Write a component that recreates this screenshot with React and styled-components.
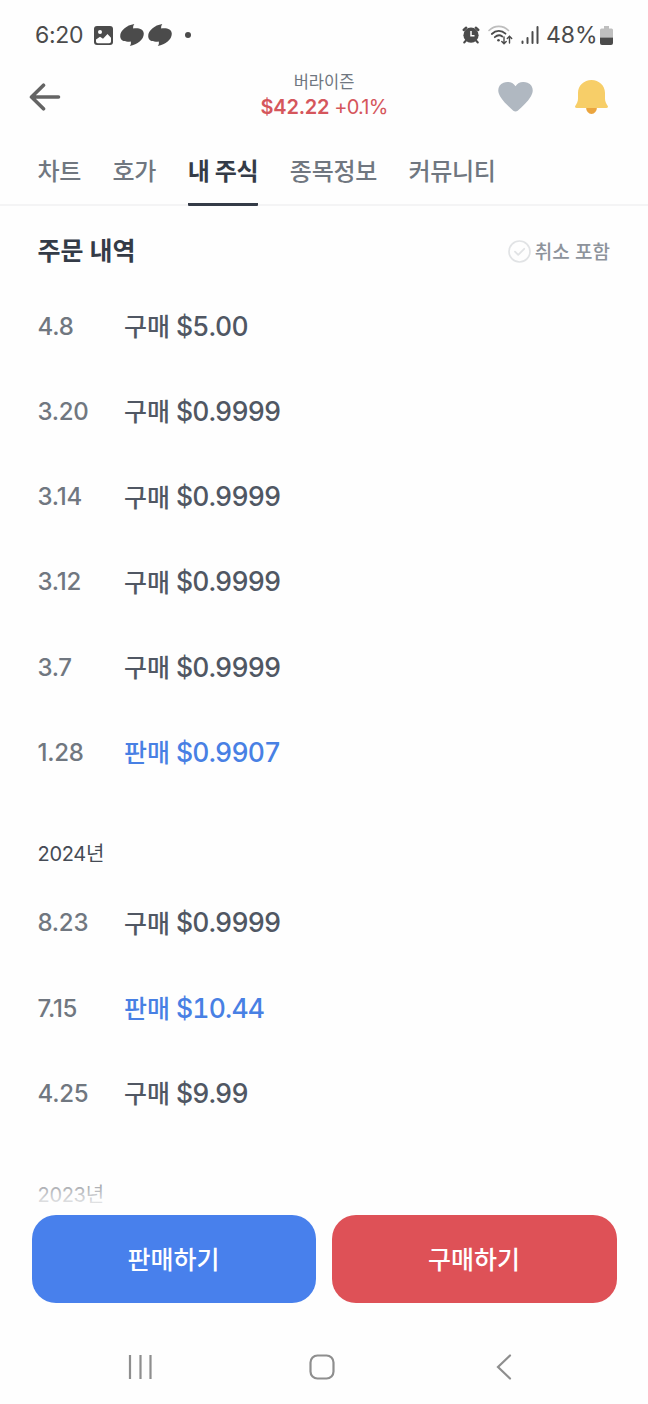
import styled, { createGlobalStyle } from "styled-components";

const GlobalStyle = createGlobalStyle`
  * {
    box-sizing: border-box;
  }
  body {
    margin: 0;
    background: #fefefe;
    font-family: Inter, "Noto Sans CJK KR", sans-serif;
  }
`;

const Screen = styled.div`
  display: flex;
  flex-direction: column;
  width: 648px;
  height: 1404px;
  overflow: hidden;
  background: #fefefe;
`;

const StatusBar = styled.div`
  display: flex;
  align-items: center;
  justify-content: space-between;
  flex-shrink: 0;
  height: 70px;
  padding: 0 35px 0 35px;
  color: #4b4b4b;
`;

const StatusGroup = styled.div`
  display: flex;
  align-items: center;
`;

const StatusText = styled.span`
  font-size: 23px;
  line-height: 30px;
  letter-spacing: -0.3px;
`;

const BatteryLevel = styled(StatusText)`
  width: 54px;
  letter-spacing: 0;
`;

const IconRow = styled.div`
  display: flex;
  align-items: center;
  gap: ${(props) => props.$gap};
  margin: 0 7px;
`;

const Dot = styled.span`
  width: 6px;
  height: 6px;
  margin-left: 9px;
  border-radius: 50%;
  background: #4b4b4b;
`;

const Clock = styled.div`
  width: 59px;
`;

const Header = styled.header`
  display: grid;
  grid-template-columns: 120px 1fr 120px;
  align-items: center;
  flex-shrink: 0;
  height: 54px;
  padding: 0 40px 0 29px;
`;

const IconButton = styled.button`
  display: flex;
  padding: 0;
  border: none;
  background: none;
  cursor: pointer;
`;

const HeaderActions = styled.div`
  display: flex;
  align-items: center;
  justify-content: flex-end;
  gap: 42px;
`;

const StockInfo = styled.div`
  display: flex;
  flex-direction: column;
  align-items: center;
  padding: 0 0 3px 11px;
`;

const StockName = styled.span`
  color: #6f7680;
  font-size: 16.5px;
  line-height: 24px;
`;

const StockPrice = styled.span`
  color: #d5565c;
  font-size: 20px;
  line-height: 27px;
  letter-spacing: ${(props) => (props.$strong ? "-0.2px" : "-0.8px")};
  font-weight: ${(props) => (props.$strong ? "600" : "400")};
`;

const PriceLine = styled.div`
  display: flex;
  gap: 5px;
`;

const Tabs = styled.nav`
  display: flex;
  flex-shrink: 0;
  gap: 31.5px;
  height: 82px;
  padding: 0 37.5px;
  border-bottom: 2px solid #f4f4f5;
`;

const Tab = styled.a`
  display: flex;
  align-items: center;
  height: 82px;
  padding-top: 12px;
  border-bottom: 3px solid ${(props) => (props.$active ? "#343b47" : "transparent")};
  border-radius: 1px;
  color: ${(props) => (props.$active ? "#343b47" : "#707780")};
  font-size: 24px;
  font-weight: ${(props) => (props.$active ? "700" : "500")};
  letter-spacing: -0.3px;
  white-space: nowrap;
  cursor: pointer;
`;

const SectionHead = styled.div`
  display: flex;
  align-items: center;
  justify-content: space-between;
  flex-shrink: 0;
  height: 77px;
  padding: 13px 38px 0 37.5px;
`;

const SectionTitle = styled.h2`
  margin: 0;
  color: #343b47;
  font-size: 25px;
  font-weight: 700;
  line-height: 36px;
`;

const Filter = styled.button`
  display: flex;
  align-items: center;
  gap: 4px;
  padding: 0;
  border: none;
  background: none;
  cursor: pointer;
`;

const FilterText = styled.span`
  color: #8d939b;
  font-family: "Noto Sans CJK KR", sans-serif;
  font-size: 19px;
  font-weight: 500;
  line-height: 28px;
`;

const History = styled.main`
  position: relative;
  flex: 1;
  min-height: 0;
  overflow: hidden;
`;

const YearLabel = styled.div`
  display: flex;
  align-items: center;
  height: 85.2px;
  padding: 30px 37.5px 0;
  color: #454b55;
  font-size: 20px;
  letter-spacing: -0.3px;
`;

const Order = styled.div`
  display: flex;
  align-items: center;
  height: 85.25px;
  padding: 0 37.5px;
`;

const OrderDate = styled.span`
  width: 86.5px;
  padding-top: 1px;
  color: #707780;
  font-size: 24px;
  font-weight: 500;
  letter-spacing: -0.25px;
`;

const OrderType = styled.span`
  width: 52px;
  padding-bottom: 1px;
  color: ${(props) => (props.$sell ? "#4880e4" : "#505763")};
  font-size: 25px;
  font-weight: 500;
`;

const OrderAmount = styled.span`
  color: ${(props) => (props.$sell ? "#4880e4" : "#505763")};
  font-size: 26.5px;
  font-weight: 500;
  font-variant-numeric: tabular-nums;
  letter-spacing: -0.8px;
`;

const Fade = styled.div`
  position: absolute;
  left: 0;
  right: 0;
  bottom: 0;
  height: 60px;
  background: linear-gradient(rgba(254, 254, 254, 0), #fefefe 95%);
`;

const Actions = styled.footer`
  display: grid;
  grid-template-columns: 284px 285px;
  gap: 16px;
  flex-shrink: 0;
  height: 88px;
  padding: 0 32px;
`;

const ActionButton = styled.button`
  padding: 0 1px 3px 0;
  border: none;
  border-radius: 24px;
  background: ${(props) => (props.$sell ? "#4880ec" : "#de5157")};
  color: #fff;
  font-family: inherit;
  font-size: 25px;
  font-weight: 500;
  cursor: pointer;
`;

const SystemNav = styled.div`
  display: grid;
  grid-template-columns: 180.5px 187px auto;
  align-items: center;
  flex-shrink: 0;
  height: 101px;
  padding: 27px 0 0 128px;
`;

const orders = [
  { date: "4.8", amount: "$5.00" },
  { date: "3.20", amount: "$0.9999" },
  { date: "3.14", amount: "$0.9999" },
  { date: "3.12", amount: "$0.9999" },
  { date: "3.7", amount: "$0.9999" },
  { date: "1.28", amount: "$0.9907", sell: true },
];

const orders2024 = [
  { date: "8.23", amount: "$0.9999" },
  { date: "7.15", amount: "$10.44", sell: true },
  { date: "4.25", amount: "$9.99" },
];

const tabs = ["차트", "호가", "내 주식", "종목정보", "커뮤니티"];

const GalleryIcon = () => (
  <svg width="19" height="19" viewBox="0 0 19 19">
    <rect width="19" height="19" rx="3" fill="#4b4b4b" />
    <circle cx="6" cy="6" r="2" fill="#fefefe" />
    <path
      d="M2 13.500L6 10.700L9 12.800L13.500 8L17 11.800V15.500A1.800 1.800 0 0 1 15.200 17.300H3.800A1.800 1.800 0 0 1 2 15.500Z"
      fill="#fefefe"
    />
  </svg>
);

const SwirlIcon = () => (
  <svg width="24" height="22" viewBox="0 0 24 22">
    <path
      d="M14.300 0C13.200 1.500 12.900 3 13.300 4.500C18.500 3.700 23.800 5 23.800 9.800C23.800 15.500 17.500 20.800 9.800 22C10.900 20.500 11.200 19 10.700 17.400C5.500 18.200 .2 17 .2 12.200C.2 6.500 6.500 1.200 14.300 0Z"
      fill="#4b4b4b"
    />
  </svg>
);

const AlarmIcon = () => (
  <svg width="18" height="18" viewBox="0 0 18 18">
    <path d="M1.700 4L4.200 1.700M16.300 4L13.800 1.700" stroke="#4b4b4b" strokeWidth="2.400" strokeLinecap="round" />
    <path d="M4 14.500l-1.800 2M14 14.500l1.800 2" stroke="#4b4b4b" strokeWidth="2" strokeLinecap="round" />
    <circle cx="9" cy="9.200" r="7.600" fill="#4b4b4b" />
    <path d="M9 5V9.800h3.500" fill="none" stroke="#fefefe" strokeWidth="1.500" />
  </svg>
);

const WifiIcon = () => (
  <svg width="25" height="20" viewBox="0 0 25 20" fill="none" strokeLinecap="round">
    <path d="M1 5.500C6.500 0 15 0 20.500 5.500" stroke="#bdbdbd" strokeWidth="1.600" />
    <path d="M3.800 9C8 5 13.500 5 17.500 8.700" stroke="#4b4b4b" strokeWidth="1.800" />
    <path d="M6.800 12.200C9.500 9.800 12 9.800 14.300 11.500" stroke="#4b4b4b" strokeWidth="1.800" />
    <circle cx="10.500" cy="15.200" r="1.300" fill="#4b4b4b" />
    <path
      d="M16 12v6.500M13.800 16.500l2.200 2.300 2.200-2.300M21.500 18v-6.500M19.300 13.500l2.200-2.300 2.200 2.300"
      stroke="#4b4b4b"
      strokeWidth="1.400"
    />
  </svg>
);

const SignalIcon = () => (
  <svg width="18" height="18" viewBox="0 0 18 18" stroke="#4b4b4b" strokeWidth="2" strokeLinecap="round">
    <path d="M1.500 15.500V17M6.500 12V17M11.500 6V17M16.500 1V17" />
  </svg>
);

const BatteryIcon = () => (
  <svg width="13" height="19" viewBox="0 0 13 19">
    <path d="M4 0h5v2.500h2.500A1.500 1.500 0 0 1 13 4v7.500H0V4a1.500 1.500 0 0 1 1.500-1.500H4z" fill="#bfbfbf" />
    <path d="M0 11.500h13V17a2 2 0 0 1-2 2H2a2 2 0 0 1-2-2z" fill="#4b4b4b" />
  </svg>
);

const BackIcon = () => (
  <svg width="32" height="28" viewBox="0 0 32 28" fill="none" stroke="#646464" strokeWidth="3.600" strokeLinecap="round" strokeLinejoin="round">
    <path d="M14.500 2.200L2.500 14L14.500 25.800M2.500 14H29.500" />
  </svg>
);

const HeartIcon = () => (
  <svg width="35" height="30" viewBox="0 0 35 30">
    <path
      d="M17.500 4.300C20-.2 25.500-.8 29.500 .8C35 3 36.300 9 32.800 14.500C29.500 20 24.500 24.300 19.700 28.700C18.400 29.800 16.600 29.800 15.300 28.700C10.500 24.300 5.500 20 2.200 14.500C-1.300 9 0 3 5.500 .8C9.500-.8 15-.2 17.500 4.300Z"
      fill="#b0b8c1"
    />
  </svg>
);

const BellIcon = () => (
  <svg width="33" height="35" viewBox="0 0 33 35">
    <path d="M11 27h11a5.500 7 0 0 1-11 0z" fill="#eba53e" />
    <path
      d="M16.500 0C24 0 30 5.500 30 13v5.500c0 3 1 4.800 2.600 7.300.8 1.300.2 2.200-1.200 2.200H1.600C.2 28-.4 27.100.4 25.800 2 23.300 3 21.500 3 18.500V13C3 5.500 9 0 16.500 0z"
      fill="#f7ce68"
    />
  </svg>
);

const CheckIcon = () => (
  <svg width="23" height="23" viewBox="0 0 23 23" fill="none" stroke="#e1e3e5" strokeLinecap="round" strokeLinejoin="round">
    <circle cx="11.500" cy="11.500" r="10.500" strokeWidth="1.700" />
    <path d="M7 11.700l3.200 3.100 6-6" strokeWidth="1.800" />
  </svg>
);

const OrderRow = ({ order }) => (
  <Order>
    <OrderDate>{order.date}</OrderDate>
    <OrderType $sell={order.sell}>{order.sell ? "판매" : "구매"}</OrderType>
    <OrderAmount $sell={order.sell}>{order.amount}</OrderAmount>
  </Order>
);

const App = () => {
  return (
    <Screen lang="ko">
      <GlobalStyle />
      <StatusBar>
        <StatusGroup>
          <Clock>
            <StatusText>6:20</StatusText>
          </Clock>
          <GalleryIcon />
          <IconRow $gap="4px">
            <SwirlIcon />
            <SwirlIcon />
            <Dot />
          </IconRow>
        </StatusGroup>
        <StatusGroup>
          <IconRow $gap="8px">
            <AlarmIcon />
            <WifiIcon />
            <SignalIcon />
          </IconRow>
          <BatteryLevel>48%</BatteryLevel>
          <BatteryIcon />
        </StatusGroup>
      </StatusBar>

      <Header>
        <IconButton aria-label="뒤로">
          <BackIcon />
        </IconButton>
        <StockInfo>
          <StockName>버라이즌</StockName>
          <PriceLine>
            <StockPrice $strong>$42.22</StockPrice>
            <StockPrice>+0.1%</StockPrice>
          </PriceLine>
        </StockInfo>
        <HeaderActions>
          <IconButton aria-label="관심">
            <HeartIcon />
          </IconButton>
          <IconButton aria-label="알림">
            <BellIcon />
          </IconButton>
        </HeaderActions>
      </Header>

      <Tabs>
        {tabs.map((tab) => (
          <Tab key={tab} $active={tab === "내 주식"}>
            {tab}
          </Tab>
        ))}
      </Tabs>

      <SectionHead>
        <SectionTitle>주문 내역</SectionTitle>
        <Filter>
          <CheckIcon />
          <FilterText>취소 포함</FilterText>
        </Filter>
      </SectionHead>

      <History>
        {orders.map((order) => (
          <OrderRow key={order.date} order={order} />
        ))}
        <YearLabel>2024년</YearLabel>
        {orders2024.map((order) => (
          <OrderRow key={order.date} order={order} />
        ))}
        <YearLabel>2023년</YearLabel>
        <Fade />
      </History>

      <Actions>
        <ActionButton $sell>판매하기</ActionButton>
        <ActionButton>구매하기</ActionButton>
      </Actions>

      <SystemNav>
        <svg width="25" height="26" viewBox="0 0 25 26" stroke="#8e8e8e" strokeWidth="2.200">
          <path d="M2 1v24M12.500 1v24M22.500 1v24" />
        </svg>
        <svg width="26" height="26" viewBox="0 0 26 26" fill="none" stroke="#8e8e8e" strokeWidth="2.200">
          <rect x="1.500" y="1.500" width="23" height="23" rx="7" />
        </svg>
        <svg width="16" height="26" viewBox="0 0 16 26" fill="none" stroke="#8e8e8e" strokeWidth="2.200" strokeLinecap="round">
          <path d="M14 1.500L2 13L14 24.500" />
        </svg>
      </SystemNav>
    </Screen>
  );
};

export default App;
